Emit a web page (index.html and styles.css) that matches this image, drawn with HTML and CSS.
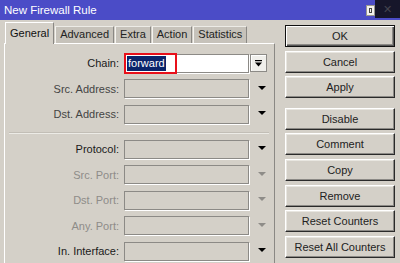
FILE: index.html
```html
<!DOCTYPE html>
<html>
<head>
<meta charset="utf-8">
<link rel="stylesheet" href="styles.css">
</head>
<body>
<div class="window">
  <div class="titlebar">
    <span class="title">New Firewall Rule</span>
    <span class="restore"><span class="restore-inner"></span></span>
    <span class="close-shade"><span class="close-x">✕</span></span>
  </div>
  <div class="main">
    <div class="left">
      <div class="tabs">
        <div class="tab active">General</div>
        <div class="tab">Advanced</div>
        <div class="tab">Extra</div>
        <div class="tab">Action</div>
        <div class="tab">Statistics</div>
      </div>
      <div class="panel">
        <div class="group">
          <div class="row">
            <label class="lbl">Chain:</label>
            <div class="field white"><span class="mark"><span class="sel">forward</span></span></div>
            <div class="dropbtn"><svg width="9" height="9" viewBox="0 0 9 9"><rect x="1" y="1" width="7" height="1.2" fill="#000"/><path d="M1 3.5 H8 L4.5 7.5 Z" fill="#000"/></svg></div>
          </div>
          <div class="row">
            <label class="lbl dim">Src. Address:</label>
            <div class="field"></div>
            <div class="arrow"><span class="tri"></span></div>
          </div>
          <div class="row">
            <label class="lbl dim">Dst. Address:</label>
            <div class="field"></div>
            <div class="arrow"><span class="tri"></span></div>
          </div>
        </div>
        <div class="sep"></div>
        <div class="group">
          <div class="row">
            <label class="lbl">Protocol:</label>
            <div class="field"></div>
            <div class="arrow"><span class="tri"></span></div>
          </div>
          <div class="row">
            <label class="lbl off">Src. Port:</label>
            <div class="field"></div>
            <div class="arrow"><span class="tri off"></span></div>
          </div>
          <div class="row">
            <label class="lbl off">Dst. Port:</label>
            <div class="field"></div>
            <div class="arrow"><span class="tri off"></span></div>
          </div>
          <div class="row">
            <label class="lbl off">Any. Port:</label>
            <div class="field"></div>
            <div class="arrow"><span class="tri off"></span></div>
          </div>
          <div class="row">
            <label class="lbl">In. Interface:</label>
            <div class="field"></div>
            <div class="arrow"><span class="tri"></span></div>
          </div>
        </div>
      </div>
    </div>
    <div class="right">
      <button class="btn default">OK</button>
      <button class="btn">Cancel</button>
      <button class="btn">Apply</button>
      <button class="btn gap">Disable</button>
      <button class="btn">Comment</button>
      <button class="btn">Copy</button>
      <button class="btn">Remove</button>
      <button class="btn">Reset Counters</button>
      <button class="btn">Reset All Counters</button>
    </div>
  </div>
</div>
</body>
</html>
```
FILE: styles.css
```css
* { box-sizing: border-box; }
html, body { margin: 0; padding: 0; }
body {
  width: 400px;
  height: 263px;
  overflow: hidden;
  background: #d4d0c8;
  font-family: "Liberation Sans", Arial, sans-serif;
  font-size: 11px;
  color: #222;
}
.window { width: 400px; height: 263px; }
.titlebar {
  position: relative;
  height: 20px;
  background: #4b4cc7;
  color: #fff;
  padding-left: 4px;
  line-height: 20px;
  font-size: 11.5px;
}
.restore {
  position: absolute;
  left: 366px;
  top: 5px;
  width: 9px;
  height: 11px;
  background: #f4f2ee;
  border: 1px solid #9a9890;
}
.restore-inner {
  position: absolute;
  left: 2px;
  top: 2px;
  width: 3px;
  height: 5px;
  border: 1px solid #444;
}
.close-shade {
  position: absolute;
  left: 375px;
  top: 0;
  width: 25px;
  height: 18px;
  background: #16162a;
  text-align: center;
  line-height: 18px;
}
.close-x { color: #44444e; font-size: 11px; }

.main { display: flex; }
.left { margin-left: 4px; width: 271px; display: flex; flex-direction: column; }
.tabs { display: flex; align-items: flex-end; height: 23px; padding-left: 1px; }
.tab {
  height: 17px;
  line-height: 15px;
  padding: 0 4px;
  background: #c6c2ba;
  border-top: 1px solid #ecebe6;
  border-left: 1px solid #f4f3ef;
  border-right: 1px solid #8a8884;
  margin-right: 1px;
  color: #222;
}
.tab.active {
  height: 22px;
  line-height: 20px;
  background: #d4d0c8;
  border-top: 1px solid #fff;
  border-left: 1px solid #fff;
  border-right: 1px solid #8a8884;
  padding: 0 4px 0 4px;
  margin-bottom: -1px;
  position: relative;
  z-index: 1;
  color: #111;
}
.panel {
  height: 220px;
  border-top: 1px solid #fff;
  border-left: 1px solid #fff;
  border-right: 1px solid #8a8884;
  padding: 9px 0 0 4px;
}
.group { display: flex; flex-direction: column; gap: 5.5px; }
.row {
  display: grid;
  grid-template-columns: 110px 125px 18px;
  column-gap: 5px;
  height: 20px;
  align-items: center;
}
.lbl { text-align: right; color: #1a1a1a; white-space: nowrap; }
.lbl.dim { color: #444; }
.lbl.off { color: #8e8c88; }
.field {
  height: 19px;
  border: 1px solid #8c8a86;
  box-shadow: 1px 1px 0 #fff;
  background: #d4d0c8;
}
.field.white {
  background: #fff;
  position: relative;
}
.mark {
  position: absolute;
  left: -1px;
  top: -2px;
  width: 53px;
  height: 21px;
  border: 2px solid #e8101a;
  padding: 1px 0 0 1px;
}
.sel {
  display: inline-block;
  background: #0a246a;
  color: #fff;
  height: 15px;
  line-height: 15px;
  padding: 0 1px;
}
.dropbtn {
  width: 17px;
  height: 18px;
  margin-left: -4px;
  background: #f0efeb;
  border: 1px solid #8c8a86;
  box-shadow: inset 1px 1px 0 #fff;
  display: flex;
  align-items: center;
  justify-content: center;
}
.arrow { display: flex; justify-content: center; margin-left: -2px; padding-bottom: 2px; }
.tri {
  width: 0;
  height: 0;
  border-left: 4px solid transparent;
  border-right: 4px solid transparent;
  border-top: 4px solid #000;
}
.tri.off { border-top-color: #8e8c88; }
.sep {
  margin: 8px 5px 5px 0;
  height: 2px;
  border-top: 1px solid #c2beb6;
  border-bottom: 1px solid #ecebe6;
}
.right {
  margin-left: 10px;
  width: 110px;
  padding-top: 5px;
  display: flex;
  flex-direction: column;
  gap: 3.6px;
}
.btn {
  height: 22px;
  width: 110px;
  font-family: inherit;
  font-size: 11px;
  color: #222;
  background: #d4d0c8;
  border: 1px solid;
  border-color: #fff #2a2a2a #2a2a2a #fff;
  box-shadow: inset -1px -1px 0 #8c8a86, inset 1px 1px 0 #e8e6e0;
  padding: 0;
}
.btn.default {
  border: 1px solid #111;
  box-shadow: inset 1px 1px 0 #fff, inset -1px -1px 0 #555, inset -2px -2px 0 #8c8a86;
}
.btn.gap { margin-top: 6px; }
```
